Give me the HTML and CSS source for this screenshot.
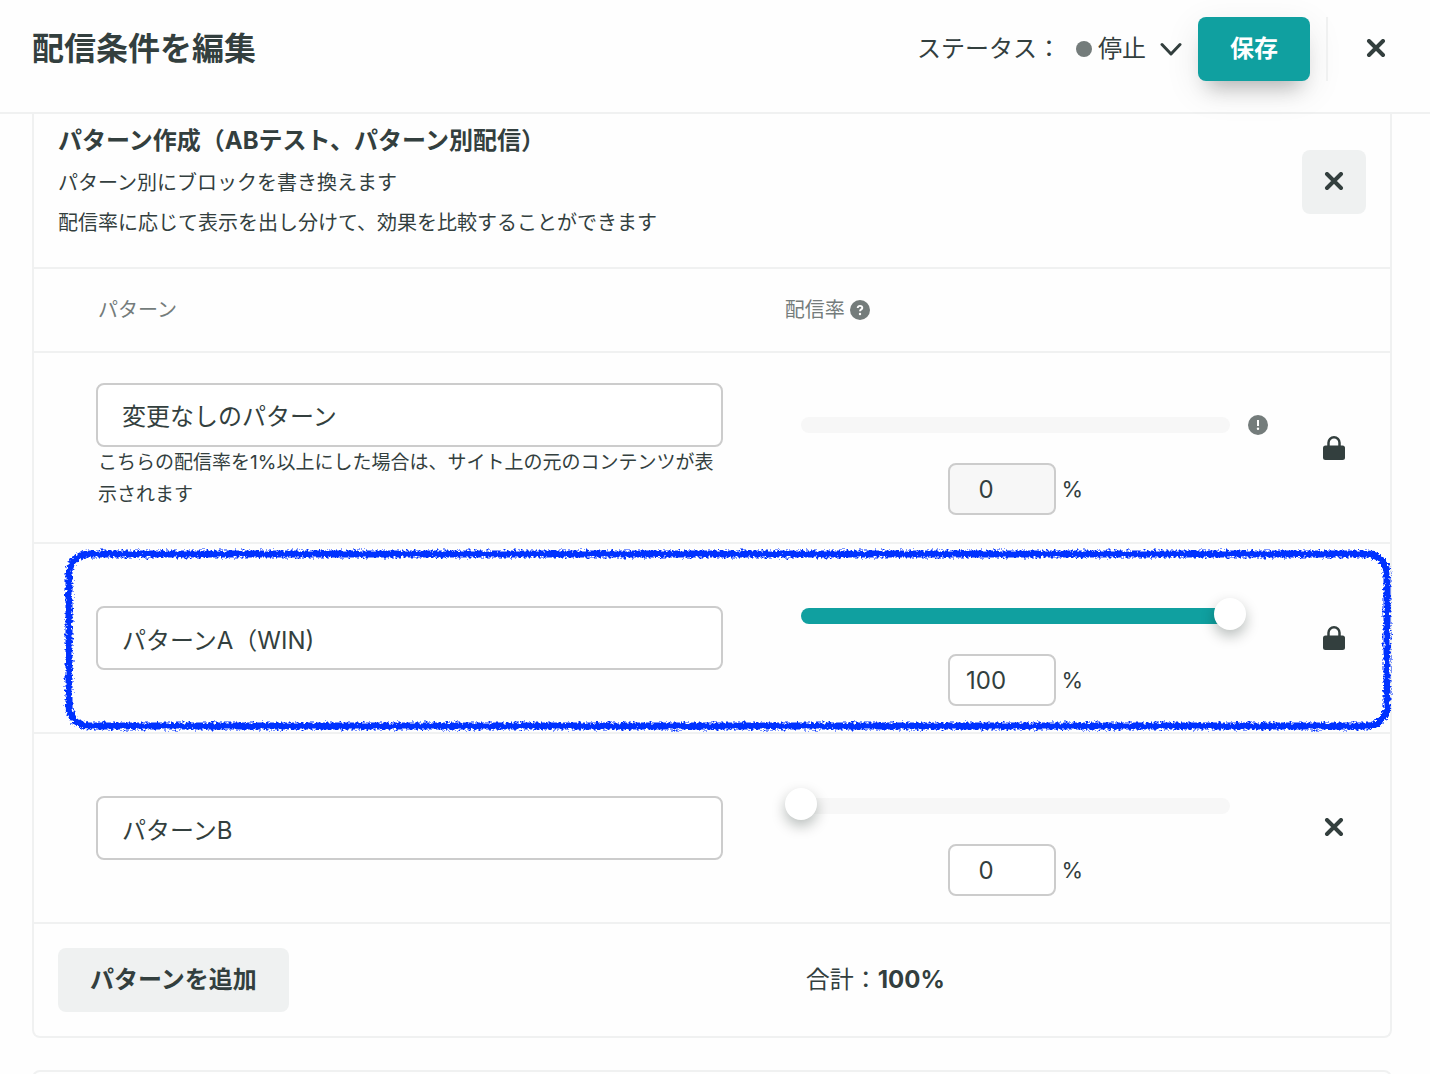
FILE: index.html
```html
<!DOCTYPE html>
<html lang="ja">
<head>
<meta charset="utf-8">
<meta name="viewport" content="width=device-width, initial-scale=1">
<title>配信条件を編集</title>
<link rel="stylesheet" href="styles.css">
</head>
<body>
<svg class="defs" aria-hidden="true">
  <symbol id="icon-close" viewBox="0 0 20 20"><path d="M3 2 17 16M17 2 3 16" fill="none" stroke="currentColor" stroke-width="4" stroke-linecap="round"/></symbol>
  <symbol id="icon-lock" viewBox="0 0 22 24"><path d="M5.500 12V6.800a5.500 5.500 0 0 1 11 0V12" fill="none" stroke="currentColor" stroke-width="2.500"/><rect y="9.500" width="22" height="14.500" rx="2.500" fill="currentColor"/></symbol>
  <filter id="crayon" x="-2%" y="-5%" width="104%" height="110%">
    <feTurbulence type="fractalNoise" baseFrequency="0.4" numOctaves="2" seed="4" result="noise"/>
    <feDisplacementMap in="SourceGraphic" in2="noise" scale="7" xChannelSelector="R" yChannelSelector="G"/>
  </filter>
</svg>

<header class="topbar">
  <h1 class="topbar-title">配信条件を編集</h1>
  <div class="topbar-actions">
    <label class="status-label" for="status">ステータス：</label>
    <span class="status-dot"></span>
    <span class="status-field">
      <select class="status-select" id="status"><option>停止</option><option>公開</option></select>
      <svg class="status-chevron" viewBox="0 0 22 14" aria-hidden="true"><path d="M2 2.500 11 12 20 2.500" fill="none" stroke="currentColor" stroke-width="3" stroke-linecap="round" stroke-linejoin="round"/></svg>
    </span>
    <button class="button button-primary" type="button">保存</button>
    <span class="divider"></span>
    <button class="button button-icon" type="button" aria-label="閉じる"><svg class="icon-close" aria-hidden="true"><use href="#icon-close"/></svg></button>
  </div>
</header>

<main class="content">
  <section class="card card-scrolled">
    <div class="card-head">
      <div class="card-intro">
        <h2 class="card-title">パターン作成（ABテスト、パターン別配信）</h2>
        <p class="card-text">パターン別にブロックを書き換えます</p>
        <p class="card-text">配信率に応じて表示を出し分けて、効果を比較することができます</p>
      </div>
      <button class="button button-icon button-muted" type="button" aria-label="パターン作成を閉じる"><svg class="icon-close" aria-hidden="true"><use href="#icon-close"/></svg></button>
    </div>

    <table class="patterns">
      <colgroup><col class="col-name"><col class="col-rate"><col class="col-action"></colgroup>
      <thead>
        <tr>
          <th class="head-name" scope="col">パターン</th>
          <th class="head-rate" scope="col"><span class="head-flex">配信率
            <svg class="icon-round" viewBox="0 0 20 20" role="img" aria-label="ヘルプ"><circle cx="10" cy="10" r="10" fill="currentColor"/><path d="M7.700 8c0-1.300 1-2.100 2.300-2.100s2.300.8 2.300 2c0 1.500-2.300 1.500-2.300 3.300" fill="none" stroke="#fff" stroke-width="1.900"/><circle cx="10" cy="14" r="1.200" fill="#fff"/></svg></span></th>
          <td></td>
        </tr>
      </thead>
      <tbody>
        <tr class="row-base">
          <td class="cell-name">
            <input class="name-input" type="text" value="変更なしのパターン" aria-label="パターン名">
            <p class="name-help">こちらの配信率を1%以上にした場合は、サイト上の元のコンテンツが表示されます</p>
          </td>
          <td class="cell-rate">
            <div class="rate">
              <div class="slider"><div class="track"></div><input class="range range-locked" type="range" value="0" disabled aria-label="配信率"></div>
              <svg class="icon-round rate-note" viewBox="0 0 20 20" role="img" aria-label="注意"><circle cx="10" cy="10" r="10" fill="currentColor"/><path d="M10 5v6" stroke="#fff" stroke-width="2"/><circle cx="10" cy="13.700" r="1.200" fill="#fff"/></svg>
              <label class="percent"><input class="percent-input" type="text" inputmode="numeric" value="0" disabled>%</label>
            </div>
          </td>
          <td class="cell-action"><button class="button button-icon" type="button" aria-label="ロック"><svg class="icon-lock" aria-hidden="true"><use href="#icon-lock"/></svg></button></td>
        </tr>
        <tr class="row-marked">
          <td class="cell-name">
            <input class="name-input" type="text" value="パターンA（WIN)" aria-label="パターン名">
            <div class="marker" aria-hidden="true"><svg class="marker-svg"><g filter="url(#crayon)"><rect class="marker-line" rx="20"/></g></svg></div>
          </td>
          <td class="cell-rate">
            <div class="rate">
              <div class="slider"><div class="track"><div class="track-fill" style="width:100%"></div></div><input class="range" type="range" value="100" aria-label="配信率"></div>
              <label class="percent"><input class="percent-input" type="text" inputmode="numeric" value="100">%</label>
            </div>
          </td>
          <td class="cell-action"><button class="button button-icon" type="button" aria-label="ロック"><svg class="icon-lock" aria-hidden="true"><use href="#icon-lock"/></svg></button></td>
        </tr>
        <tr>
          <td class="cell-name"><input class="name-input" type="text" value="パターンB" aria-label="パターン名"></td>
          <td class="cell-rate">
            <div class="rate">
              <div class="slider"><div class="track"></div><input class="range" type="range" value="0" aria-label="配信率"></div>
              <label class="percent"><input class="percent-input" type="text" inputmode="numeric" value="0">%</label>
            </div>
          </td>
          <td class="cell-action"><button class="button button-icon" type="button" aria-label="削除"><svg class="icon-close" aria-hidden="true"><use href="#icon-close"/></svg></button></td>
        </tr>
      </tbody>
      <tfoot>
        <tr>
          <td class="foot-add"><button class="button button-muted button-add" type="button">パターンを追加</button></td>
          <td class="foot-total">合計：<strong>100%</strong></td>
          <td></td>
        </tr>
      </tfoot>
    </table>
  </section>
  <section class="card card-next"></section>
</main>
</body>
</html>
```

FILE: styles.css
```css
:root {
  --ink: #333f3e;
  --muted: #747c7b;
  --line: #f0f1f1;
  --field: #cccccc;
  --accent: #10a0a0;
  --soft: #eff1f1;
  --paper: #fefefe;
}

* { box-sizing: border-box; }

body {
  display: flex;
  flex-direction: column;
  height: 100vh;
  margin: 0;
  background: var(--paper);
  color: var(--ink);
  font: 24px/40px Inter, "Noto Sans CJK JP", sans-serif;
}

h1, h2, p { margin: 0; }

button, input, select { font: inherit; color: inherit; }

.defs { position: absolute; width: 0; height: 0; }

/* Top bar */
.topbar {
  position: relative;
  z-index: 1;
  display: flex;
  flex: none;
  align-items: center;
  justify-content: space-between;
  padding: 17px 22px 31px 32px;
  border-bottom: 2px solid var(--line);
}

.topbar-title { font-size: 32px; font-weight: 700; }
.topbar-actions { display: flex; align-items: center; }
.status-dot { width: 16px; height: 16px; margin: 0 6px 0 15px; border-radius: 50%; background: var(--muted); }
.status-field { display: grid; align-items: center; width: 84px; }
.status-select {
  grid-area: 1 / 1;
  width: 100%;
  padding: 0;
  border: 0;
  background: none;
  appearance: none;
}
.status-chevron { grid-area: 1 / 1; justify-self: end; width: 22px; height: 14px; pointer-events: none; }

.divider { width: 2px; height: 64px; margin: 0 16px; background: var(--line); }

/* Buttons */
.button {
  height: 64px;
  padding: 0 32px;
  border: 0;
  border-radius: 8px;
  background: none;
  font-weight: 700;
  cursor: pointer;
}
.button-primary {
  margin-left: 16px;
  background: var(--accent);
  color: #fff;
  box-shadow: 0 16px 20px -10px rgba(0, 0, 0, 0.24), 0 10px 36px rgba(0, 0, 0, 0.09);
}
.button-icon { display: inline-flex; flex: none; align-items: center; justify-content: center; width: 64px; padding: 0; }
.button-muted { background: var(--soft); }

.icon-close { width: 20px; height: 20px; }
.icon-lock { width: 22px; height: 24px; }
.icon-round { width: 20px; height: 20px; color: var(--muted); }

/* Cards */
.content { flex: 1; min-height: 0; padding: 0 38px 0 32px; overflow: hidden; }
.card { border: 2px solid var(--line); border-radius: 8px; }
.card-scrolled { border-top: 0; border-radius: 0 0 8px 8px; }
.card-next { height: 128px; margin-top: 32px; }

.card-head {
  display: flex;
  align-items: center;
  justify-content: space-between;
  padding: 7px 24px 24px;
}
.card-title { margin-bottom: 2px; font-size: 24px; font-weight: 700; }
.card-text { font-size: 20px; }

/* Pattern table */
.patterns { width: 100%; border-spacing: 0; table-layout: fixed; }
.col-name { width: 53%; }
.col-action { width: 112px; }
.patterns th, .patterns td { padding: 0; border-top: 2px solid var(--line); }
.patterns th { height: 84px; color: var(--muted); font-size: 20px; font-weight: 400; text-align: left; }
.patterns .head-name { padding-left: 64px; }
.patterns .head-rate { padding-left: 32px; }
.head-flex { display: flex; align-items: center; gap: 5px; }

.patterns .cell-name { padding: 0 30px 0 62px; }
.name-input {
  display: block;
  width: 100%;
  height: 64px;
  padding: 0 24px;
  border: 2px solid var(--field);
  border-radius: 8px;
  background: #fff;
}
.name-help { padding: 0 0 2px 2px; font-size: 19px; line-height: 32px; }

.patterns .cell-rate { padding: 64px 10px 26px 48px; vertical-align: top; }
.row-base { height: 191px; }
.rate { display: grid; grid-template-columns: 1fr 38px; row-gap: 30px; align-items: center; }
.slider { display: grid; align-items: center; height: 16px; }
.track { grid-area: 1 / 1; height: 16px; overflow: hidden; border-radius: 8px; background: #f7f7f7; }
.track-fill { height: 100%; background: var(--accent); }
.range {
  grid-area: 1 / 1;
  width: calc(100% + 32px);
  height: 32px;
  margin: -10px -16px -6px;
  background: none;
  appearance: none;
}
.range::-webkit-slider-thumb {
  width: 32px;
  height: 32px;
  border-radius: 50%;
  background: #fff;
  box-shadow: 0 6px 14px rgba(0, 20, 16, 0.28);
  appearance: none;
}
.range-locked { visibility: hidden; }
.rate-note { height: 20px; margin: -2px 0; justify-self: end; }
.percent { display: flex; grid-area: 2 / 1; align-items: center; justify-content: center; gap: 6px; font-size: 22px; }
.percent-input {
  width: 108px;
  height: 52px;
  padding: 0 31px 0 0;
  border: 2px solid var(--field);
  border-radius: 8px;
  background: #fff;
  font-size: 24px;
  text-align: center;
}
.percent-input:disabled { background: #f7f7f7; }

.cell-action { text-align: center; }
.cell-action .button { vertical-align: middle; }

.patterns .foot-add { padding: 24px; }
.button-add { display: block; }
.patterns .foot-total { padding-left: 53px; }

/* Hand-drawn highlight round the winning pattern */
.row-marked { position: relative; }
.marker { position: absolute; inset: 6px -3px 0 30px; pointer-events: none; }
.marker-svg { display: block; width: 100%; height: 100%; overflow: visible; }
.marker-line {
  x: 5px;
  y: 6px;
  width: calc(100% - 11px);
  height: calc(100% - 12px);
  fill: none;
  stroke: #0433ff;
  stroke-width: 7px;
}
```
